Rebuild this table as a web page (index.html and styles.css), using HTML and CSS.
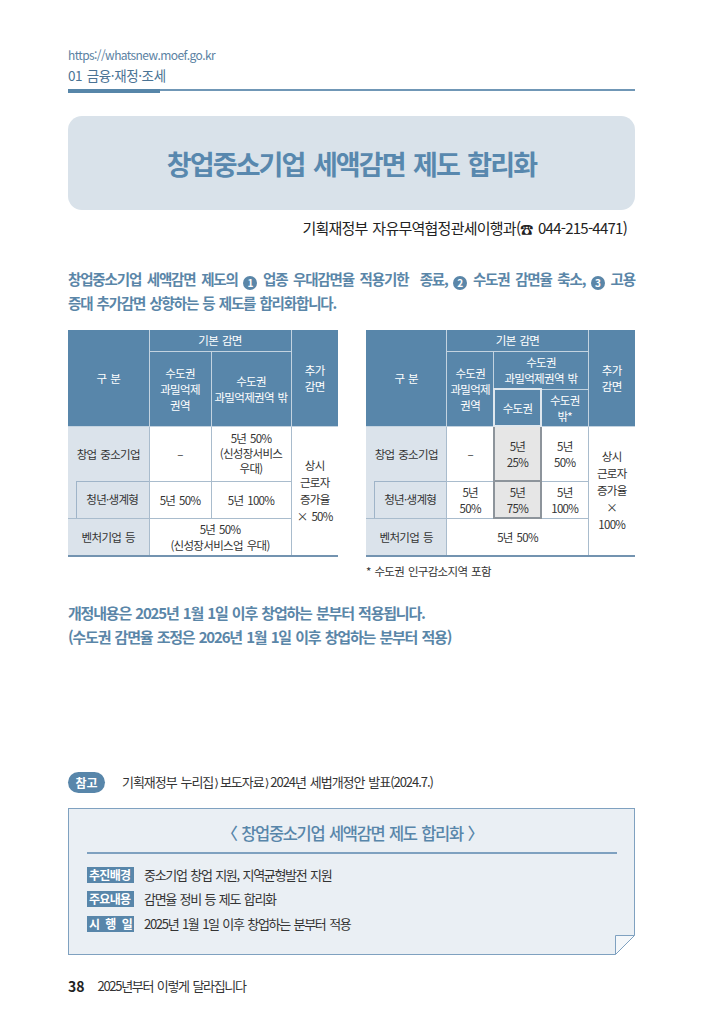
FILE: index.html
```html
<!DOCTYPE html>
<html lang="ko">
<head>
<meta charset="utf-8">
<title>창업중소기업 세액감면 제도 합리화</title>
<link rel="stylesheet" href="styles.css">
</head>
<body>
<div class="page">
  <header class="top">
    <div class="url">https://whatsnew.moef.go.kr</div>
    <div class="section">01 금융·재정·조세</div>
    <div class="rule"><span class="rule-bar"></span><span class="rule-line"></span></div>
  </header>

  <div class="title-box"><h1>창업중소기업 세액감면 제도 합리화</h1></div>

  <p class="contact">기획재정부 자유무역협정관세이행과(<span class="tel">☎</span> 044-215-4471)</p>

  <p class="lead"><span class="l1">창업중소기업 세액감면 제도의 <span class="num">1</span> 업종 우대감면율 적용기한&nbsp; 종료, <span class="num">2</span> 수도권 감면율 축소, <span class="num">3</span> 고용</span><span class="l2">증대 추가감면 상향하는 등 제도를 합리화합니다.</span></p>

  <div class="tables">
    <div class="tcol">
      <table class="grid left">
        <colgroup><col class="w-cat"><col class="w-l2"><col class="w-l3"><col class="w-ladd"></colgroup>
        <thead>
          <tr class="h1"><th rowspan="2">구 분</th><th colspan="2">기본 감면</th><th rowspan="2">추가<br>감면</th></tr>
          <tr class="h2l"><th>수도권<br>과밀억제<br>권역</th><th>수도권<br>과밀억제권역 밖</th></tr>
        </thead>
        <tbody>
          <tr class="r1"><td class="cat top">창업 중소기업</td><td>–</td><td class="tight">5년 50%<br>(신성장서비스<br>우대)</td><td rowspan="3" class="add">상시<br>근로자<br>증가율<br>× 50%</td></tr>
          <tr class="r2"><td class="cat sub">청년·생계형</td><td>5년 50%</td><td>5년 100%</td></tr>
          <tr class="r3"><td class="cat">벤처기업 등</td><td colspan="2">5년 50%<br>(신성장서비스업 우대)</td></tr>
        </tbody>
      </table>
    </div>
    <div class="tcol">
      <table class="grid right">
        <colgroup><col class="w-cat"><col class="w-r"><col class="w-r"><col class="w-r"><col class="w-r"></colgroup>
        <thead>
          <tr class="h1"><th rowspan="3">구 분</th><th colspan="3">기본 감면</th><th rowspan="3">추가<br>감면</th></tr>
          <tr class="h2r"><th rowspan="2">수도권<br>과밀억제<br>권역</th><th colspan="2">수도권<br>과밀억제권역 밖</th></tr>
          <tr class="h3r"><th class="hl-h">수도권</th><th>수도권<br>밖*</th></tr>
        </thead>
        <tbody>
          <tr class="r1"><td class="cat top">창업 중소기업</td><td>–</td><td class="hl">5년<br>25%</td><td>5년<br>50%</td><td rowspan="3" class="add">상시<br>근로자<br>증가율<br>×<br>100%</td></tr>
          <tr class="r2"><td class="cat sub">청년·생계형</td><td>5년<br>50%</td><td class="hl">5년<br>75%</td><td>5년<br>100%</td></tr>
          <tr class="r3"><td class="cat">벤처기업 등</td><td colspan="3">5년 50%</td></tr>
        </tbody>
      </table>
      <p class="note">* 수도권 인구감소지역 포함</p>
    </div>
  </div>

  <p class="change">개정내용은 2025년 1월 1일 이후 창업하는 분부터 적용됩니다.<br>(수도권 감면율 조정은 2026년 1월 1일 이후 창업하는 분부터 적용)</p>

  <div class="ref">
    <span class="ref-tag">참고</span>
    <span class="ref-text">기획재정부 누리집<span class="gt">⟩</span>보도자료<span class="gt">⟩</span>2024년 세법개정안 발표(2024.7.)</span>
  </div>

  <div class="summary">
    <h2>〈 창업중소기업 세액감면 제도 합리화 〉</h2>
    <div class="sep"></div>
    <ul class="items">
      <li class="item"><span class="label">추진배경</span><span class="item-text">중소기업 창업 지원, 지역균형발전 지원</span></li>
      <li class="item"><span class="label">주요내용</span><span class="item-text">감면율 정비 등 제도 합리화</span></li>
      <li class="item"><span class="label">시 행 일</span><span class="item-text">2025년 1월 1일 이후 창업하는 분부터 적용</span></li>
    </ul>
    <svg class="fold" viewBox="0 0 20 20" width="20" height="20" aria-hidden="true">
      <polygon points="20,0 20,20 0,20" fill="#ffffff"/>
      <polygon points="0.5,0.5 19.5,0.5 0.5,19.5" fill="#f4f7fa" stroke="#7fa1c0" stroke-width="1"/>
    </svg>
  </div>

  <footer class="footer"><span class="pg">38</span><span class="footer-text">2025년부터 이렇게 달라집니다</span></footer>
</div>
</body>
</html>
```

FILE: styles.css
```css
* { box-sizing: border-box; }
html, body { margin: 0; padding: 0; background: #fff; }
body {
  font-family: "Noto Sans CJK KR", "Noto Sans", "DejaVu Sans", sans-serif;
  color: #333;
  letter-spacing: -0.07em;
  word-spacing: 0.08em;
}
.page { width: 703px; padding: 47px 68px 0 68px; }

/* header */
.url { font-size: 12px; line-height: 16px; color: #5b82a3; letter-spacing: -0.05em; word-spacing: 0; }
.section { margin-top: 3px; font-size: 13.5px; line-height: 18px; color: #4a7394; letter-spacing: -0.03em; }
.rule { margin-top: 5px; display: flex; align-items: flex-start; }
.rule-bar { width: 92px; height: 4px; background: #5786a9; }
.rule-line { flex: 1; height: 1.5px; background: #7097b6; }

/* title */
.title-box {
  margin-top: 23px; height: 94px; border-radius: 14px; background: #d9e2ea;
  display: flex; align-items: center; justify-content: center;
}
.title-box h1 {
  margin: 0; font-size: 27px; line-height: 1; font-weight: 700; color: #5888ae;
  letter-spacing: -0.07em; word-spacing: 0.1em;
}
.contact { margin: 8px 0 0; padding-right: 8px; text-align: right; font-size: 15px; line-height: 20px; color: #222; letter-spacing: -0.05em; }
.tel { letter-spacing: 0; font-size: 13px; }

/* lead */
.lead { margin: 28px 0 0; font-size: 14.5px; line-height: 24px; font-weight: 700; color: #5a86a8; letter-spacing: -0.08em; }
.lead .l1 { display: block; white-space: nowrap; text-align: justify; text-align-last: justify; }
.lead .l2 { display: block; }
.num {
  display: inline-flex; align-items: center; justify-content: center;
  width: 14px; height: 14px; border-radius: 50%;
  background: #5a86a8; color: #fff; font-size: 10px; line-height: 1; font-weight: 700;
  letter-spacing: 0; vertical-align: -1.5px;
}

/* tables */
.tables { margin-top: 15px; display: flex; justify-content: space-between; align-items: flex-start; }
table.grid {
  border-collapse: collapse; table-layout: fixed;
  border-style: hidden; border-bottom: 2px solid #7393b0;
  font-size: 11.5px; line-height: 16px; text-align: center; letter-spacing: -0.06em;
}
.grid.left { width: 270px; }
.grid.right { width: 269px; }
.w-cat { width: 81px; }
.w-l2 { width: 62px; }
.w-l3 { width: 80px; }
.w-ladd { width: 47px; }
.w-r { width: 47px; }
.grid th {
  background: #5886aa; color: #fff; font-weight: 400; padding: 0;
  border: 1px solid #c3d3e0;
}
.grid td { background: #fff; color: #333; padding: 0; border: 1px solid #a9bccd; }
.grid tr.h1 { height: 21px; }
.grid tr.h2l { height: 75px; }
.grid tr.h2r { height: 38px; }
.grid tr.h3r { height: 37px; }
.grid tr.r1 { height: 55px; }
.grid tr.r2 { height: 37px; }
.grid tr.r3 { height: 38px; }
.grid td.tight { line-height: 15px; }
.grid td.add { line-height: 17px; }
.grid td.cat { background: #dbe3eb; }
.grid td.cat.top { border-bottom: 0 none; }
.grid td.cat.sub {
  border-top: 0 none; padding-left: 8px;
  background:
    linear-gradient(#9fb4c8, #9fb4c8) 8px 0 / 100% 1px no-repeat,
    linear-gradient(#9fb4c8, #9fb4c8) 8px 0 / 1px 100% no-repeat,
    #dbe3eb;
}
.grid td.hl { background: #e6e6e6; border: 2px solid #8d949b; }
.grid th.hl-h { border: 2px solid #dfe7ee; }
.note { margin: 6px 0 0; font-size: 11.5px; line-height: 16px; color: #333; letter-spacing: -0.06em; }

/* change notice */
.change { margin: 22px 0 0; font-size: 15px; line-height: 24px; font-weight: 700; color: #5a86a8; letter-spacing: -0.08em; }

/* reference */
.ref { margin-top: 123px; display: flex; align-items: center; gap: 17px; }
.ref-tag {
  width: 37px; height: 21px; border-radius: 11px; background: #5886aa; color: #fff;
  font-size: 12px; font-weight: 700; letter-spacing: 0;
  display: flex; align-items: center; justify-content: center;
}
.ref-text { font-size: 13px; line-height: 20px; color: #333; letter-spacing: -0.08em; }
.gt { font-family: "DejaVu Sans", sans-serif; font-size: 12px; letter-spacing: 0; margin: 0 1px; }

/* summary box */
.summary {
  position: relative; margin-top: 15px; height: 147px;
  background: #eaeff4; border: 1px solid #7fa1c0;
  padding: 12px 17px 0 18px;
}
.summary h2 { margin: 0; font-size: 16.5px; line-height: 24px; font-weight: 500; color: #5886aa; text-align: center; letter-spacing: -0.08em; }
.sep { margin-top: 7px; height: 1.5px; background: #7fa1c0; }
.items { margin: 13px 0 0; padding: 0; list-style: none; display: flex; flex-direction: column; gap: 8.5px; }
.item { display: flex; align-items: center; gap: 10px; height: 16px; }
.label {
  flex: none; width: 47px; height: 16px; padding: 0 2px; background: #5886aa; color: #fff;
  font-size: 12px; line-height: 16px; font-weight: 700; letter-spacing: -0.06em; white-space: nowrap;
  text-align: justify; text-align-last: justify;
}
.item-text { font-size: 13px; line-height: 16px; color: #333; letter-spacing: -0.1em; white-space: nowrap; }
.fold { position: absolute; right: -1px; bottom: -1px; width: 20px; height: 20px; }

/* footer */
.footer { margin-top: 21px; display: flex; align-items: center; gap: 13px; line-height: 20px; }
.pg { font-size: 14px; font-weight: 700; color: #222; letter-spacing: 0; }
.footer-text { font-size: 13px; color: #333; letter-spacing: -0.1em; }
```
